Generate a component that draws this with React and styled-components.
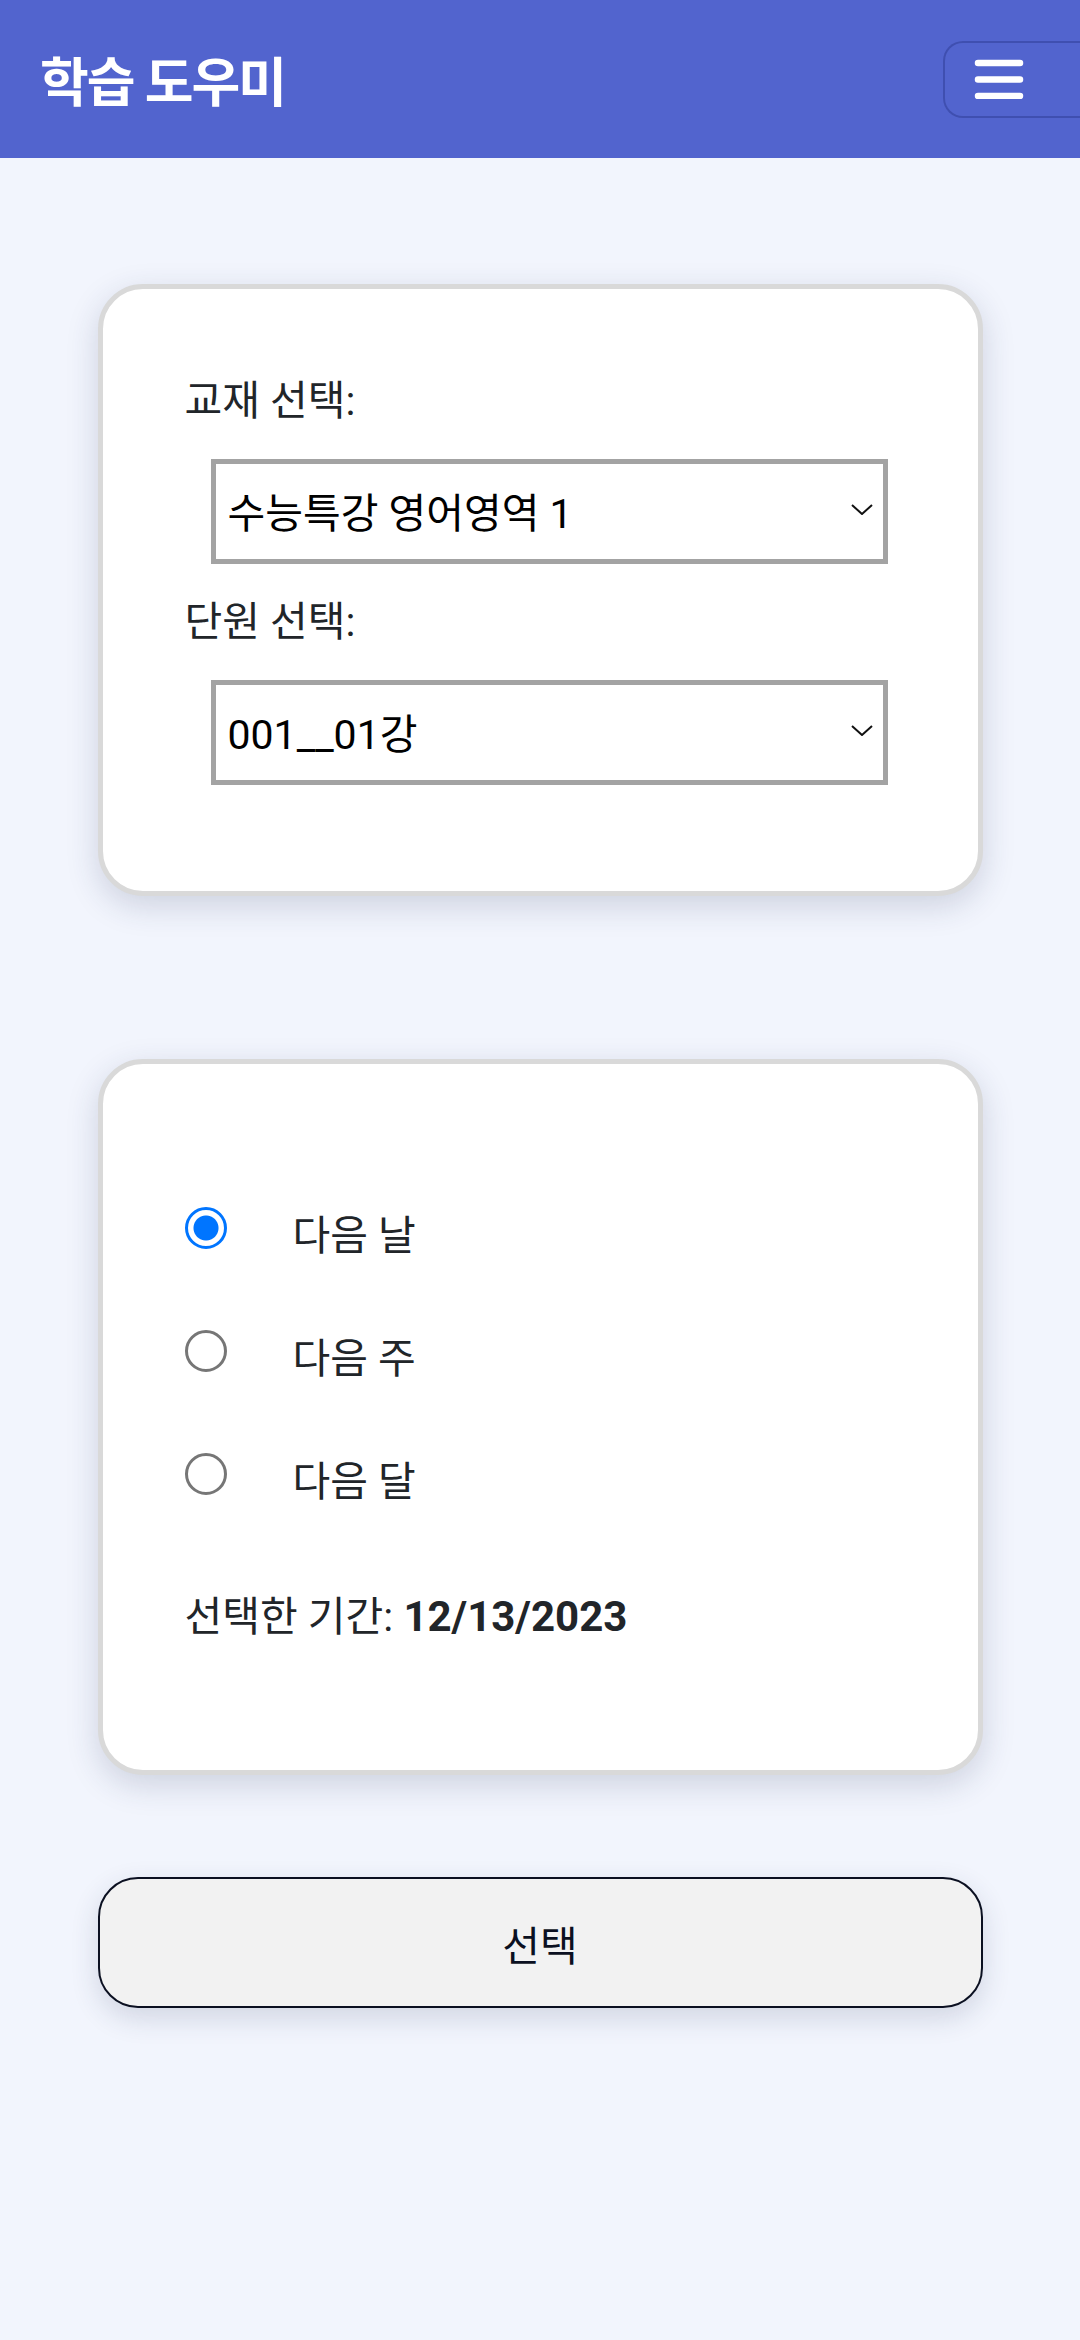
import React, { useState } from 'react';
import styled, { createGlobalStyle } from 'styled-components';

const GlobalStyle = createGlobalStyle`
  * {
    box-sizing: border-box;
  }
  html,
  body {
    margin: 0;
    padding: 0;
    background: #f2f5fd;
  }
  body {
    font-family: Roboto, 'Noto Sans CJK KR', sans-serif;
    color: #212529;
    overflow-x: hidden;
  }
`;

const periods = [
  { id: 'day', label: '다음 날', date: '12/13/2023' },
  { id: 'week', label: '다음 주', date: '12/19/2023' },
  { id: 'month', label: '다음 달', date: '1/12/2024' },
];

const App = () => {
  const [period, setPeriod] = useState('day');
  const selected = periods.find(p => p.id === period);

  return (
    <Page>
      <GlobalStyle />
      <Header>
        <Title>학습 도우미</Title>
        <MenuButton aria-label="메뉴">
          <svg width="50" height="40" viewBox="0 0 50 40">
            <path
              d="M4 4h42M4 20.5h42M4 37h42"
              stroke="#fff"
              strokeWidth="6.5"
              strokeLinecap="round"
            />
          </svg>
        </MenuButton>
      </Header>

      <Main>
        <Card $pt={84} $pb={76}>
          <Label>교재 선택:</Label>
          <SelectBox>
            <span>수능특강 영어영역 1</span>
            <Chevron />
          </SelectBox>
          <Label>단원 선택:</Label>
          <SelectBox>
            <span>001__01강</span>
            <Chevron />
          </SelectBox>
        </Card>

        <Card $pt={111} $pb={124} $mt={163}>
          {periods.map(p => (
            <RadioRow key={p.id}>
              <Radio
                name="period"
                checked={period === p.id}
                onChange={() => setPeriod(p.id)}
              />
              <RadioText>{p.label}</RadioText>
            </RadioRow>
          ))}
          <Summary>
            선택한 기간: <strong>{selected.date}</strong>
          </Summary>
        </Card>

        <SubmitButton>선택</SubmitButton>
      </Main>
    </Page>
  );
};

const Chevron = () => (
  <svg width="22" height="11" viewBox="0 0 22 11">
    <path d="M1 1l10 9 10-9" fill="none" stroke="#111" strokeWidth="2" />
  </svg>
);

export default App;

const Page = styled.div`
  min-height: 2340px;
  background: #f2f5fd;
`;

const Header = styled.header`
  display: flex;
  align-items: center;
  justify-content: space-between;
  height: 158px;
  padding-left: 40px;
  background-color: #5264ce;
`;

const Title = styled.h1`
  margin: 0;
  font-size: 53px;
  font-weight: 700;
  letter-spacing: -2px;
  color: #fff;
`;

const MenuButton = styled.button`
  display: flex;
  align-items: center;
  width: 137px;
  height: 77px;
  padding: 0 0 0 29px;
  background: transparent;
  border: 2px solid rgba(30, 40, 120, 0.35);
  border-right: none;
  border-radius: 20px 0 0 20px;
`;

const Main = styled.main`
  width: 885px;
  margin: 0 auto;
  padding-top: 126px;
`;

const Card = styled.section`
  margin-top: ${props => props.$mt || 0}px;
  padding: ${props => props.$pt}px 82px ${props => props.$pb}px;
  background: #fff;
  border: 5px solid #d9d9d9;
  border-radius: 45px;
  box-shadow: 0 10px 32px rgba(40, 50, 90, 0.18);
`;

const Label = styled.div`
  font-size: 41px;
  line-height: 57px;
  color: #212529;
`;

const SelectBox = styled.div`
  display: flex;
  align-items: center;
  justify-content: space-between;
  width: 677px;
  height: 105px;
  margin: 29px 0 30px 26px;
  padding: 0 10px 4px 12px;
  border: 5px solid #a3a3a3;
  background: #fff;
  font-size: 41px;
  color: #000;
`;

const RadioRow = styled.label`
  display: flex;
  align-items: center;
  height: 123px;
`;

const Radio = styled.input.attrs({ type: 'radio' })`
  appearance: none;
  flex-shrink: 0;
  width: 42px;
  height: 42px;
  margin: 0 66px 17px 0;
  border: 3px solid #767676;
  border-radius: 50%;
  background: #fff;

  &:checked {
    border-color: #0075ff;
    background: radial-gradient(circle, #0075ff 0 12px, #fff 13px);
  }
`;

const RadioText = styled.span`
  font-size: 41px;
  line-height: 57px;
`;

const Summary = styled.p`
  margin: 44px 0 0;
  font-size: 41px;
  line-height: 57px;

  strong {
    font-size: 42px;
    font-weight: 700;
  }
`;

const SubmitButton = styled.button`
  display: block;
  width: 100%;
  height: 131px;
  margin-top: 102px;
  background: #f2f2f2;
  border: 2px solid #0b1021;
  border-radius: 40px;
  box-shadow: 0 10px 28px rgba(40, 50, 90, 0.16);
  font-family: Roboto, 'Noto Sans CJK KR', sans-serif;
  font-size: 41px;
  color: #0b1021;
`;
